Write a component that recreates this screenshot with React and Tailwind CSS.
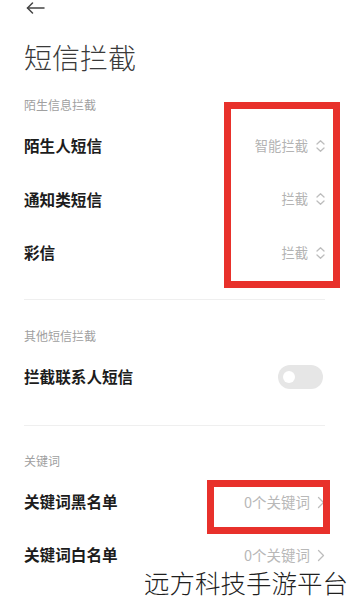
// SMS blocking settings screen with annotation boxes.

const font = { fontFamily: '"Noto Sans CJK SC", "Noto Sans", sans-serif' };

function UpDownIcon() {
  return (
    <svg width="11" height="14" viewBox="0 0 11 14" fill="none" stroke="#bdbdbd" strokeWidth="1.3" strokeLinecap="round" strokeLinejoin="round">
      <path d="M2 5 L5.5 1.8 L9 5" />
      <path d="M2 9 L5.5 12.2 L9 9" />
    </svg>
  );
}

function ChevronRight() {
  return (
    <svg width="8" height="13" viewBox="0 0 8 13" fill="none" stroke="#bdbdbd" strokeWidth="1.3" strokeLinecap="round" strokeLinejoin="round">
      <path d="M1.5 1.5 L6.5 6.5 L1.5 11.5" />
    </svg>
  );
}

function SectionLabel({ children, className = '' }) {
  return <div className={`text-[12px] leading-[16px] text-[#a0a0a0] ${className}`}>{children}</div>;
}

function SelectRow({ label, value, height = 'h-[53.5px]' }) {
  return (
    <div className={`flex items-center justify-between ${height}`}>
      <span className="text-[15.6px] font-bold text-[#1c1c1c]">{label}</span>
      <span className="flex items-center gap-[7px] text-[13.3px] text-[#b3b3b3]">
        {value}
        <UpDownIcon />
      </span>
    </div>
  );
}

function LinkRow({ label, value }) {
  return (
    <div className="flex items-center justify-between h-[53px]">
      <span className="text-[15.6px] font-bold text-[#1c1c1c]">{label}</span>
      <span className="flex items-center gap-[7px] text-[14.5px] text-[#b8b8b8] pr-[1px]">
        {value}
        <ChevronRight />
      </span>
    </div>
  );
}

export default function App() {
  return (
    <div className="relative w-[349px] h-[600px] overflow-hidden bg-white" style={font}>
      <div className="pl-6 pr-[23px]">
        {/* back arrow */}
        <div className="h-[16px] pl-[2px] pt-[2px]">
          <svg width="19" height="12" viewBox="0 0 19 12" fill="none" stroke="#444" strokeWidth="1.5" strokeLinecap="round" strokeLinejoin="round">
            <path d="M18 6 H1.5" />
            <path d="M6.5 1 L1.5 6 L6.5 11" />
          </svg>
        </div>

        <h1 className="mt-[24px] text-[28px] leading-[34px] font-light text-[#3a3a3a]">短信拦截</h1>

        <SectionLabel className="mt-[23px]">陌生信息拦截</SectionLabel>
        <div className="mt-[6px]">
          <SelectRow label="陌生人短信" value="智能拦截" />
          <SelectRow label="通知类短信" value="拦截" />
          <SelectRow label="彩信" value="拦截" />
        </div>

        <div className="mt-[19px] h-px bg-[#efefef] mr-[1px]" />

        <SectionLabel className="mt-[28px]">其他短信拦截</SectionLabel>
        <div className="mt-[6px] flex items-center justify-between h-[54px]">
          <span className="text-[15.6px] font-bold text-[#1c1c1c]">拦截联系人短信</span>
          <div className="mr-[3px] w-[45px] h-[24px] rounded-full bg-[#e6e6e6] flex items-center pl-[5px]">
            <div className="w-[12px] h-[12px] rounded-full bg-white" />
          </div>
        </div>

        <div className="mt-[21px] h-px bg-[#efefef] mr-[1px]" />

        <SectionLabel className="mt-[27px]">关键词</SectionLabel>
        <div className="mt-[7px]">
          <LinkRow label="关键词黑名单" value="0个关键词" />
          <LinkRow label="关键词白名单" value="0个关键词" />
        </div>
      </div>

      {/* red annotation boxes */}
      <div className="absolute left-[224px] top-[102px] w-[116px] h-[186px] border-[7px] border-[#e8312b]" />
      <div className="absolute left-[207px] top-[480px] w-[123px] h-[54px] border-[7px] border-[#e8312b]" />

      {/* watermark */}
      <div className="absolute left-[144px] top-[566px] text-[25.5px] leading-[32px] font-light text-[#1f1f1f] whitespace-nowrap">
        远方科技手游平台
      </div>
    </div>
  );
}
